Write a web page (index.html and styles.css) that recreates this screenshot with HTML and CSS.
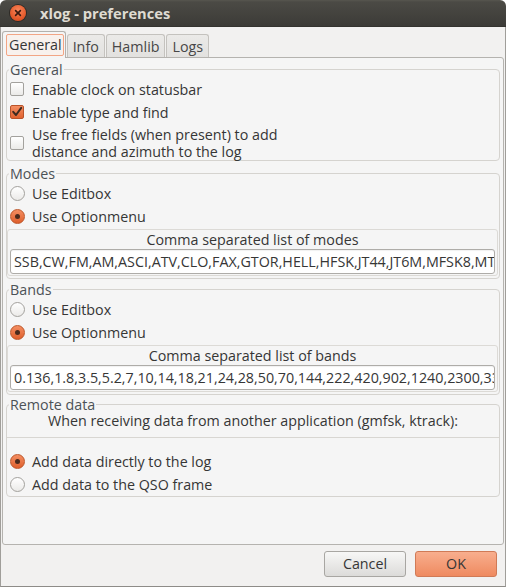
FILE: index.html
```html
<!DOCTYPE html>
<html>
<head>
<meta charset="utf-8">
<title>xlog - preferences</title>
<link rel="stylesheet" href="styles.css">
</head>
<body>
<div class="window">
  <div class="titlebar">
    <span class="close">
      <svg width="16" height="16" viewBox="0 0 16 16"><path d="M5.6 5.6 L10.4 10.4 M10.4 5.6 L5.6 10.4" stroke="#3a1a10" stroke-width="1.6" stroke-linecap="round"/></svg>
    </span>
    <span class="title">xlog - preferences</span>
  </div>
  <div class="body">
    <div class="tabs">
      <div class="tab active"><span class="focus">General</span></div>
      <div class="tab">Info</div>
      <div class="tab">Hamlib</div>
      <div class="tab">Logs</div>
    </div>
    <div class="page">
      <fieldset class="frame frame-general">
        <legend>General</legend>
        <div class="row row-1"><span class="check"></span><span>Enable clock on statusbar</span></div>
        <div class="row row-2"><span class="check checked"><svg width="14" height="14" viewBox="0 0 14 14"><path d="M3.2 6.8 L6 10 L11.2 2.8" fill="none" stroke="#3d2a20" stroke-width="2" stroke-linecap="round" stroke-linejoin="round"/></svg></span><span>Enable type and find</span></div>
        <div class="row row-3"><span class="check"></span><span class="two-lines">Use free fields (when present) to add<br>distance and azimuth to the log</span></div>
      </fieldset>

      <fieldset class="frame frame-list frame-modes">
        <legend>Modes</legend>
        <div class="row row-1"><span class="radio"></span><span>Use Editbox</span></div>
        <div class="row row-2"><span class="radio checked"><span class="dot"></span></span><span>Use Optionmenu</span></div>
        <div class="listbox">
          <div class="listlabel">Comma separated list of modes</div>
          <input class="entry" type="text" value="SSB,CW,FM,AM,ASCI,ATV,CLO,FAX,GTOR,HELL,HFSK,JT44,JT6M,MFSK8,MT63,PAC,PAC2,PAC3,PCW,PSK31,PSK63,Q15,RTTY,SSTV,THRB,TOR">
        </div>
      </fieldset>

      <fieldset class="frame frame-list frame-bands">
        <legend>Bands</legend>
        <div class="row row-1"><span class="radio"></span><span>Use Editbox</span></div>
        <div class="row row-2"><span class="radio checked"><span class="dot"></span></span><span>Use Optionmenu</span></div>
        <div class="listbox">
          <div class="listlabel">Comma separated list of bands</div>
          <input class="entry" type="text" value="0.136,1.8,3.5,5.2,7,10,14,18,21,24,28,50,70,144,222,420,902,1240,2300,3300,5650,10000,24000,47000,76000">
        </div>
      </fieldset>

      <fieldset class="frame frame-remote">
        <legend>Remote data</legend>
        <div class="remote-text">When receiving data from another application (gmfsk, ktrack):</div>
        <div class="separator"></div>
        <div class="row row-r1"><span class="radio checked"><span class="dot"></span></span><span>Add data directly to the log</span></div>
        <div class="row row-r2"><span class="radio"></span><span>Add data to the QSO frame</span></div>
      </fieldset>
    </div>
    <div class="buttons">
      <div class="button cancel">Cancel</div>
      <div class="button ok">OK</div>
    </div>
  </div>
</div>
</body>
</html>
```
FILE: styles.css
```css
* { box-sizing: border-box; }

html, body {
  margin: 0;
  padding: 0;
  background: #ffffff;
}

body {
  font-family: "Open Sans", "Noto Sans", sans-serif;
  font-size: 14.3px;
  color: #363636;
}

.window {
  width: 506px;
  height: 587px;
  display: flex;
  flex-direction: column;
}

.titlebar {
  height: 27px;
  flex: 0 0 27px;
  background: linear-gradient(#57564f 0px, #4b4a45 2px, #3c3b37 100%);
  border-radius: 6px 6px 0 0;
  display: flex;
  align-items: center;
  padding-left: 10px;
  border-bottom: 1px solid #34332f;
}

.close {
  width: 16px;
  height: 16px;
  border-radius: 50%;
  background: radial-gradient(circle at 50% 35%, #f7875d 0%, #e65b2c 60%, #c8441a 100%);
  box-shadow: 0 0 0 1px #2e2a26;
  display: flex;
}

.title {
  margin-left: 14px;
  font-weight: bold;
  font-size: 14.7px;
  color: #dfdbd2;
  line-height: 27px;
}

.body {
  flex: 1;
  background: #f2f1f0;
  border-left: 1px solid #a09e9a;
  border-right: 1px solid #a09e9a;
  border-bottom: 1px solid #8e8c88;
  display: flex;
  flex-direction: column;
}

.tabs {
  margin-top: 4px;
  height: 27px;
  display: flex;
  align-items: flex-end;
  gap: 1px;
  padding-left: 1px;
}

.tab {
  height: 24px;
  line-height: 23px;
  padding: 0 5px;
  border: 1px solid #c4c2be;
  border-bottom: none;
  border-radius: 3px 3px 0 0;
  background: linear-gradient(#ebeae8, #e2e1df);
  color: #474747;
}

.tab.active {
  position: relative;
  z-index: 1;
  height: 27px;
  padding: 2px 1px 0 3px;
  border-color: #b3b1ad;
  background: #f5f5f5;
  line-height: 20px;
}

.focus {
  display: block;
  height: 22px;
  padding: 0 1px 0 2px;
  border: 1px solid #f2a585;
  border-radius: 2px;
  background: #f8f1ed;
  color: #363636;
}

.page {
  margin: -1px 1px 0 1px;
  height: 488px;
  flex: 0 0 488px;
  border: 1px solid #b5b3af;
  border-radius: 0 3px 3px 3px;
  background: #f5f5f5;
  padding: 3px 3px 0 3px;
}

.frame {
  margin: 0;
  min-width: 0;
  border: 1px solid #d5d3cf;
  border-radius: 4px;
  padding: 0;
}

.frame legend {
  padding: 0 1px;
  margin-left: 2px;
  line-height: 17px;
  color: #4c5257;
}

.row {
  display: flex;
  align-items: center;
  padding-left: 3px;
}

.row > span:last-child {
  margin-left: 8px;
}

.frame-general .row-1 { height: 22px; }
.frame-general .row-2 { height: 24px; }
.frame-general .row-3 { height: 34px; margin-top: 2px; }

.two-lines {
  line-height: 17px;
}

.frame-modes { margin-top: 4px; padding-bottom: 2px; }
.frame-bands { margin-top: 2px; padding-bottom: 2px; }
.frame-remote { margin-top: 1px; }

.frame-list .row-1 { height: 22px; }
.frame-list .row-2 { height: 24px; }

.check {
  width: 14px;
  height: 14px;
  flex: 0 0 14px;
  border: 1px solid #a3a19d;
  border-radius: 2px;
  background: linear-gradient(#ffffff, #ebeae8);
  display: flex;
  align-items: center;
  justify-content: center;
}

.check.checked {
  border-color: #b9532a;
  background: linear-gradient(#f48e62, #e0622f);
}

.check svg {
  margin: -1px;
}

.radio {
  width: 15px;
  height: 15px;
  flex: 0 0 15px;
  margin-left: -0.5px;
  border: 1px solid #a3a19d;
  border-radius: 50%;
  background: linear-gradient(#ffffff, #ebeae8);
  display: flex;
  align-items: center;
  justify-content: center;
}

.radio.checked {
  border-color: #bd5629;
  background: linear-gradient(#f48e62, #de5f2c);
}

.radio .dot {
  width: 5px;
  height: 5px;
  border-radius: 50%;
  background: #4a2a1c;
  margin: 0;
}

.row > .radio + span {
  margin-left: 7.5px;
}

.listbox {
  margin: 1px 1px 0 0;
  border: 1px solid #dcdad6;
  border-radius: 3px;
  padding: 0 2px 1px 2px;
}

.listlabel {
  height: 19px;
  line-height: 19px;
  text-align: center;
}

.entry {
  display: block;
  width: 100%;
  height: 25px;
  margin: 0;
  font: inherit;
  color: #363636;
  border: 1px solid #aeaca8;
  border-radius: 3px;
  background: #ffffff;
  padding: 0 0 0 3px;
  outline: none;
  box-shadow: inset 0 1px 1px rgba(0, 0, 0, 0.06);
}

.remote-text {
  line-height: 17px;
  margin-top: -1px;
  text-align: center;
}

.separator {
  margin-top: 8px;
  height: 1px;
  background: #d8d6d2;
}

.row-r1 { margin-top: 12px; height: 23px; }
.row-r2 { height: 23px; }

.buttons {
  display: flex;
  justify-content: flex-end;
  gap: 9px;
  margin-top: 6px;
  padding-right: 8px;
}

.button {
  width: 82px;
  height: 26px;
  line-height: 24px;
  text-align: center;
  border: 1px solid #a8a6a2;
  border-radius: 3px;
  background: linear-gradient(#f7f7f6, #dcdbd9);
  color: #363636;
}

.button.ok {
  border-color: #d07a56;
  background: linear-gradient(#f8ae8e, #ef8a60);
}
```
